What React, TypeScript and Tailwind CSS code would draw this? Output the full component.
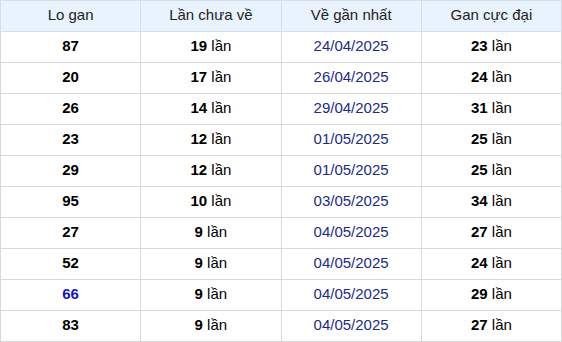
const rows: [string, number, string, number][] = [
  ['87', 19, '24/04/2025', 23],
  ['20', 17, '26/04/2025', 24],
  ['26', 14, '29/04/2025', 31],
  ['23', 12, '01/05/2025', 25],
  ['29', 12, '01/05/2025', 25],
  ['95', 10, '03/05/2025', 34],
  ['27', 9, '04/05/2025', 27],
  ['52', 9, '04/05/2025', 24],
  ['66', 9, '04/05/2025', 29],
  ['83', 9, '04/05/2025', 27],
];

export default function App() {
  return (
    <div className="w-[562px] bg-white font-['Liberation_Sans',Arial,sans-serif] text-[15px]">
      <table className="w-full table-fixed border-collapse text-center">
        <thead>
          <tr className="h-[31px] bg-[#e8f3fd] text-[#222]">
            <th className="border border-[#d6dde4] pb-px font-normal">Lo gan</th>
            <th className="border border-[#d6dde4] pb-px font-normal">Lần chưa về</th>
            <th className="border border-[#d6dde4] pb-px font-normal">Về gần nhất</th>
            <th className="border border-[#d6dde4] pb-px font-normal">Gan cực đại</th>
          </tr>
        </thead>
        <tbody>
          {rows.map(([lo, count, date, max], i) => (
            <tr key={i} className="h-[31px]">
              <td className={`border border-[#d8d8d8] pb-px font-bold ${lo === '66' ? 'text-[#1414c8]' : 'text-black'}`}>
                {lo}
              </td>
              <td className="border border-[#d8d8d8] pb-px text-black">
                <b>{count}</b> lần
              </td>
              <td className="border border-[#d8d8d8] pb-px text-[#1c2a8c]">{date}</td>
              <td className="border border-[#d8d8d8] pb-px text-black">
                <b>{max}</b> lần
              </td>
            </tr>
          ))}
        </tbody>
      </table>
    </div>
  );
}
